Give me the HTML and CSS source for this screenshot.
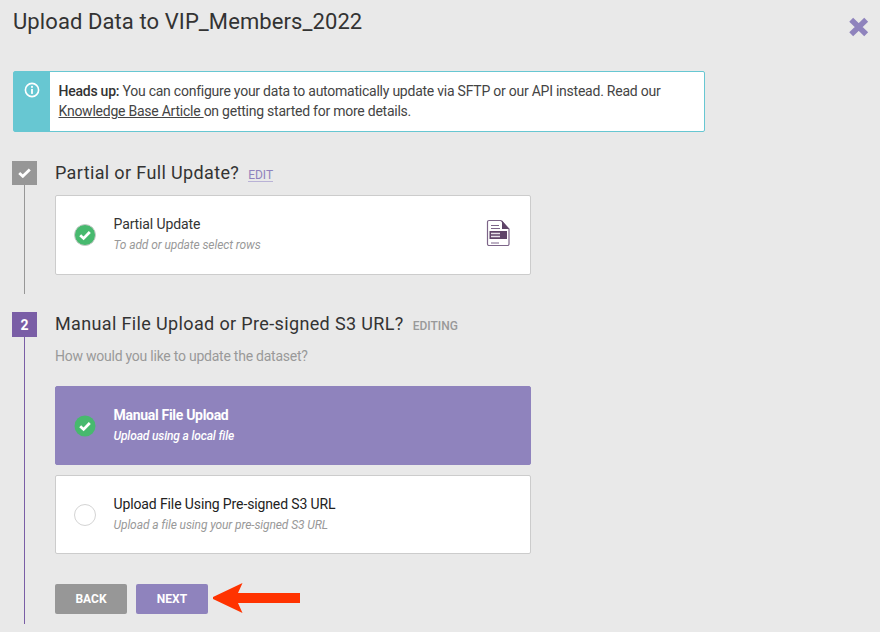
FILE: index.html
```html
<!DOCTYPE html>
<html lang="en">
<head>
    <meta charset="UTF-8">
    <meta name="viewport" content="width=device-width, initial-scale=1.0">
    <title>Upload Data</title>
    <link rel="stylesheet" href="styles.css">
</head>
<body>
    <div id="main-div">
        <div class="header">
            <h1 class="title">Upload Data to VIP_Members_2022</h1>
            <svg class="close" width="22" height="22" viewBox="0 0 22 22"><path d="M3.200 3.800L18.200 18.200M18.200 3.800L3.200 18.200" stroke="#8f83bd" stroke-width="5.600" fill="none"/></svg>
        </div>

        <div class="alert">
            <div class="alert-side">
                <svg width="16" height="16" viewBox="0 0 16 16"><circle cx="8" cy="8" r="6.6" fill="none" stroke="#ffffff" stroke-width="1.6"/><rect x="7.1" y="3.9" width="1.8" height="1.9" fill="#ffffff"/><rect x="7.1" y="6.9" width="1.8" height="5" fill="#ffffff"/></svg>
            </div>
            <p class="alert-text"><b>Heads up:</b> You can configure your data to automatically update via SFTP or our API instead. Read our <a href="#">Knowledge Base Article </a>on getting started for more details.</p>
        </div>

        <div class="step step-done">
            <div class="rail">
                <div class="marker marker-done">
                    <svg width="13" height="10" viewBox="0 0 13 10"><path d="M1.200 5L4.800 8.300L11.800 1.500" stroke="#ffffff" stroke-width="2.800" fill="none"/></svg>
                </div>
                <div class="line line-done"></div>
            </div>
            <div class="step-body">
                <div class="step-title">
                    <h2>Partial or Full Update?</h2>
                    <a href="#" class="edit">EDIT</a>
                </div>
                <div class="card">
                    <svg class="check" width="22" height="22" viewBox="0 0 22 22"><circle cx="11" cy="11" r="10.5" fill="#47b96e" stroke="#c9c9c9" stroke-width="1"/><path d="M6.200 11.200L9.600 14.400L15.800 8" stroke="#ffffff" stroke-width="2.800" fill="none"/></svg>
                    <div class="card-text">
                        <div class="card-name">Partial Update</div>
                        <div class="card-sub">To add or update select rows</div>
                    </div>
                    <svg class="doc" width="24" height="28" viewBox="0 0 24 28">
                        <path d="M1.500 3a1.500 1.500 0 0 1 1.500-1.500H15L23 10V25a1.500 1.500 0 0 1-1.500 1.500H3A1.500 1.500 0 0 1 1.500 25Z" fill="#ffffff" stroke="#7d6589" stroke-width="1.200"/>
                        <path d="M16 1.500L23 10H16Z" fill="#5f4468"/>
                        <path d="M5 6.500H13M5 9.500H14M5 24H13" stroke="#7d6589" stroke-width="1.100"/>
                        <rect x="3.500" y="12" width="17.500" height="8" fill="#5f4468"/>
                        <path d="M5 14.500H14M5 17.500H14" stroke="#e6e0e8" stroke-width="1.300"/>
                    </svg>
                </div>
            </div>
        </div>

        <div class="step step-current">
            <div class="rail">
                <div class="marker marker-current">2</div>
                <div class="line line-current"></div>
            </div>
            <div class="step-body">
                <div class="step-title">
                    <h2>Manual File Upload or Pre-signed S3 URL?</h2>
                    <span class="editing">EDITING</span>
                </div>
                <p class="question">How would you like to update the dataset?</p>
                <div class="card card-selected">
                    <svg class="check" width="22" height="22" viewBox="0 0 22 22"><circle cx="11" cy="11" r="10.500" fill="#47b96e"/><path d="M6.200 11.200L9.600 14.400L15.800 8" stroke="#ffffff" stroke-width="2.800" fill="none"/></svg>
                    <div class="card-text">
                        <div class="card-name">Manual File Upload</div>
                        <div class="card-sub">Upload using a local file</div>
                    </div>
                </div>
                <div class="card card-option">
                    <span class="radio"></span>
                    <div class="card-text">
                        <div class="card-name">Upload File Using Pre-signed S3 URL</div>
                        <div class="card-sub">Upload a file using your pre-signed S3 URL</div>
                    </div>
                </div>
                <div class="buttons">
                    <button class="btn btn-back">BACK</button>
                    <button class="btn btn-next">NEXT</button>
                    <svg class="arrow" width="88" height="32" viewBox="0 0 88 32"><path d="M0 14V16L29.500 30L25 20H87V10H25L29.500 0Z" fill="#ff3300"/></svg>
                </div>
            </div>
        </div>
    </div>
</body>
</html>
```

FILE: styles.css
```css
html, body{
    margin: 0;
    padding: 0;
}

body{
    background-color: #e9e9e9;
    font-family: Roboto, Arial, sans-serif;
    color: #333333;
    height: 632px;
    overflow: hidden;
}

#main-div{
    padding: 9px 0 0 12px;
}

.header{
    display: flex;
    justify-content: space-between;
    align-items: flex-start;
    height: 62px;
}

.title{
    margin: 0 0 0 1px;
    font-size: 22px;
    line-height: 26px;
    font-weight: 400;
    letter-spacing: 0.09px;
}

.close{
    margin: 7px 10px 0 0;
}

.alert{
    display: flex;
    width: 692px;
    height: 61px;
    margin-left: 1px;
    box-sizing: border-box;
    background-color: #ffffff;
    border: 1px solid #67c7d2;
    border-radius: 2px;
}

.alert-side{
    flex: 0 0 36px;
    background-color: #67c7d2;
    display: flex;
    justify-content: center;
    padding-top: 10px;
    box-sizing: border-box;
}

.alert-text{
    margin: 9px 0 0 8.5px;
    width: 630px;
    font-size: 14px;
    letter-spacing: -0.24px;
    line-height: 20px;
    color: #444444;
}

.alert-text b{
    font-weight: 500;
    color: #333333;
}

.alert-text a{
    color: #444444;
}

.step{
    display: flex;
}

.step-done{
    margin-top: 29px;
    height: 133px;
}

.step-current{
    margin-top: 18px;
}

.rail{
    flex: 0 0 25px;
    display: flex;
    flex-direction: column;
    align-items: center;
}

.marker{
    flex: 0 0 25px;
    width: 25px;
    display: flex;
    align-items: center;
    justify-content: center;
    color: #ffffff;
    font-size: 14px;
    font-weight: 700;
}

.marker-done{
    flex-basis: 24px;
    background-color: #979797;
}

.marker-current{
    background-color: #7a5ea6;
}

.line{
    width: 1px;
}

.line-done{
    height: 109px;
    background-color: #979797;
}

.line-current{
    height: 287px;
    background-color: #7a5ea6;
}

.step-body{
    margin-left: 18px;
    width: 476px;
}

.step-title{
    display: flex;
    align-items: baseline;
    height: 24px;
}

.step-title h2{
    margin: 0;
    font-size: 18px;
    line-height: 24px;
    font-weight: 400;
    letter-spacing: 0.36px;
    white-space: nowrap;
}

.edit{
    margin-left: 9px;
    font-size: 12px;
    color: #8f83bd;
    text-decoration: none;
    border-bottom: 1px solid #b9b2d6;
    line-height: 12px;
}

.editing{
    margin-left: 9px;
    font-size: 12px;
    font-weight: 500;
    color: #999999;
}

.question{
    margin: 10px 0 0 0;
    font-size: 14px;
    letter-spacing: -0.24px;
    line-height: 20px;
    color: #999999;
}

.card{
    display: flex;
    align-items: center;
    box-sizing: border-box;
    height: 80px;
    margin-top: 10px;
    padding: 0 20px 0 18px;
    background-color: #ffffff;
    border: 1px solid #cccccc;
    border-radius: 2px;
}

.card-selected{
    height: 79px;
    margin-top: 20px;
    background-color: #8f83bd;
    border-color: #8f83bd;
    color: #ffffff;
}

.card-option{
    height: 79px;
}

.check{
    flex: none;
}

.radio{
    flex: none;
    box-sizing: border-box;
    width: 22px;
    height: 22px;
    border: 1px solid #d4d4d4;
    border-radius: 50%;
}

.card-text{
    margin-left: 17.5px;
    flex: 1;
}

.card-name{
    font-size: 14px;
    letter-spacing: -0.12px;
    line-height: 20px;
    margin-top: -2px;
}

.card-sub{
    margin-top: 1px;
    font-size: 12px;
    letter-spacing: -0.1px;
    line-height: 20px;
    font-style: italic;
    color: #999999;
}

.card-selected .card-name,
.card-option .card-name{
    margin-top: 0;
}

.card-selected .card-name{
    font-weight: 700;
    letter-spacing: -0.3px;
}

.card-option .card-name{
    color: #222222;
}

.card-selected .card-sub{
    color: #ffffff;
    font-weight: 500;
    letter-spacing: -0.15px;
}

.doc{
    flex: none;
    margin-top: -4px;
}

.buttons{
    display: flex;
    align-items: center;
    margin-top: 29px;
    gap: 9px;
}

.btn{
    width: 72px;
    height: 30px;
    border: none;
    border-radius: 2px;
    font-family: Roboto, Arial, sans-serif;
    font-size: 12px;
    font-weight: 700;
    color: #ffffff;
    padding: 0;
}

.btn-back{
    background-color: #979797;
}

.btn-next{
    background-color: #8f83bd;
}

.arrow{
    margin-left: -4px;
}
```
